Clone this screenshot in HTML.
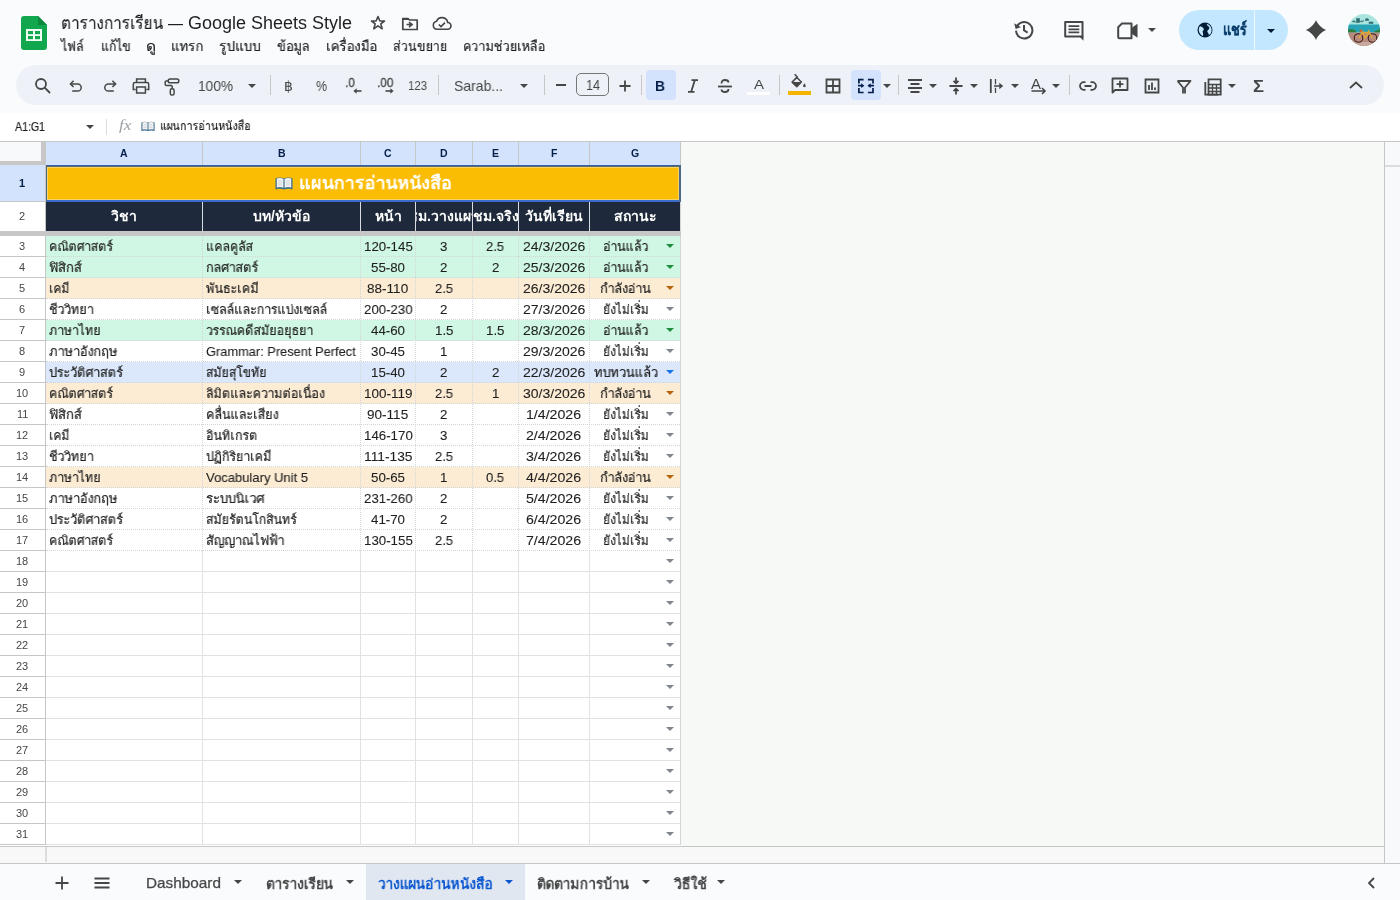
<!DOCTYPE html>
<html><head><meta charset="utf-8"><title>Sheets</title>
<style>html,body{margin:0;padding:0;width:1400px;height:900px;overflow:hidden;background:#fff;font-family:'Liberation Sans',sans-serif;}
body{position:relative}</style></head><body>
<div style="position:absolute;left:0;top:0;width:1400px;height:113px;background:#f9fbfd"></div><svg style="position:absolute;left:21px;top:16px" width="26" height="34" viewBox="0 0 26 34">
<path d="M3 0H17L26 9V31Q26 34 23 34H3Q0 34 0 31V3Q0 0 3 0Z" fill="#11a74f"/>
<path d="M17 0L26 9H17Z" fill="#0b8a3c"/>
<rect x="5" y="13" width="16" height="12" fill="#f1fff5"/>
<rect x="7" y="15" width="5" height="3.2" fill="#11a74f"/><rect x="14" y="15" width="5" height="3.2" fill="#11a74f"/>
<rect x="7" y="20" width="5" height="3.2" fill="#11a74f"/><rect x="14" y="20" width="5" height="3.2" fill="#11a74f"/>
</svg><svg style="position:absolute;left:370px;top:15px" width="16" height="16" viewBox="0 0 16 16"><path d="M8 1.5L9.9 6H14.5L10.8 8.9L12.2 13.8L8 10.9L3.8 13.8L5.2 8.9L1.5 6H6.1Z" fill="none" stroke="#444746" stroke-width="1.6" stroke-linejoin="round"/></svg><svg style="position:absolute;left:401px;top:17px" width="18" height="14" viewBox="0 0 18 14"><path d="M1.8 1.5H7L8.5 3H16.2V12.5H1.8Z" fill="none" stroke="#444746" stroke-width="1.7" stroke-linejoin="round"/><path d="M1.8 1.5H7L8.5 3H1.8Z" fill="#444746"/><path d="M5.5 7.5H9.5M8 5.2L11 7.6L8 10" fill="none" stroke="#444746" stroke-width="1.7"/></svg><svg style="position:absolute;left:432px;top:16px" width="20" height="15" viewBox="0 0 20 15"><path d="M5 13.3H15.5A3.4 3.4 0 0 0 15.7 6.5A5.8 5.8 0 0 0 4.6 5.2A4.1 4.1 0 0 0 5 13.3Z" fill="none" stroke="#444746" stroke-width="1.6"/><path d="M6.8 8.5L9 10.6L13 6.6" fill="none" stroke="#444746" stroke-width="1.6"/></svg><svg style="position:absolute;left:1012px;top:18px" width="24" height="24" viewBox="0 0 24 24"><path d="M4.6 9.2A8.2 8.2 0 1 1 4 12.6" fill="none" stroke="#444746" stroke-width="2"/><path d="M2.2 5.2L3.6 11L9 9.2Z" fill="#444746"/><path d="M12 7V12.3L15.6 14.6" fill="none" stroke="#444746" stroke-width="2"/></svg><svg style="position:absolute;left:1063px;top:20px" width="22" height="22" viewBox="0 0 22 22"><path d="M2.2 2H19.5V16.5H2.2Z" fill="none" stroke="#444746" stroke-width="2" stroke-linejoin="round"/><path d="M16 16L20.5 20.8V16Z" fill="#444746"/><path d="M5.5 6.2H16.3M5.5 9.3H16.3M5.5 12.4H16.3" stroke="#444746" stroke-width="1.8"/></svg><svg style="position:absolute;left:1117px;top:22px" width="22" height="18" viewBox="0 0 22 18"><path d="M5 1.4H14.5V16.2H2.4Q1.2 16.2 1.2 15V5.2Z" fill="none" stroke="#444746" stroke-width="2" stroke-linejoin="round"/><path d="M14.5 6L20.5 1.8V15.8L14.5 11.6Z" fill="#444746"/></svg><svg style="position:absolute;left:1148.0px;top:27.6px" width="8" height="4" viewBox="0 0 10 5"><path d="M0 0H10L5 5Z" fill="#444746"/></svg><div style="position:absolute;left:1179px;top:10px;width:109px;height:40px;border-radius:20px;background:#c2e7ff"></div><div style="position:absolute;left:1254px;top:10px;width:1px;height:40px;background:#f0f8ff"></div><svg style="position:absolute;left:1197px;top:22px" width="16" height="16" viewBox="0 0 16 16"><circle cx="8" cy="8" r="7.5" fill="#001d35"/><path d="M3.2 4.3Q5.5 4.6 6.6 6.4Q7.3 7.8 6.2 8.6Q5.2 9.3 5.8 10.6Q6.3 11.6 6 14.2Q3.8 13.2 2.3 10.5Q1.3 8 2.2 5.3Z M9.6 1.8Q10 3.5 11.2 4.2Q12.6 4.7 12.3 6.2Q12 7.6 10.6 8.4Q9.8 9.2 10.8 10.5Q12.2 12 11.8 13.3Q14.6 11.7 14.6 8Q14.6 3.5 9.6 1.8Z" fill="#c2e7ff"/></svg><svg style="position:absolute;left:1267.0px;top:28.5px" width="8" height="4" viewBox="0 0 10 5"><path d="M0 0H10L5 5Z" fill="#001d35"/></svg><svg style="position:absolute;left:1306px;top:20px" width="20" height="20" viewBox="0 0 20 20"><path d="M10 0C11.2 3.6 16.4 8.8 20 10C16.4 11.2 11.2 16.4 10 20C8.8 16.4 3.6 11.2 0 10C3.6 8.8 8.8 3.6 10 0Z" fill="#444746"/></svg><svg style="position:absolute;left:1348px;top:14px" width="32" height="32" viewBox="0 0 32 32"><defs><clipPath id="av"><circle cx="16" cy="16" r="16"/></clipPath></defs>
<g clip-path="url(#av)"><rect width="32" height="32" fill="#a9e4de"/>
<path d="M8.5 4.5H11.5V8.5H8.5Z M17.5 5Q19 4 20.5 5V6.5H17.5Z M21 8H25V9.5H21Z M4 8L6 6.5L8 8.5M11.5 7L14 8L16 6.5" fill="#2f6f73" stroke="#2f6f73" stroke-width="0.6"/>
<rect y="10.5" width="32" height="8" fill="#27a3b6"/>
<path d="M0 18.5V15.5Q3 14.5 5 15.5Q7 15 8.5 18.5Z M32 18.5V15.5Q30 15 28 17Q26 17 25.5 18.5Z" fill="#2b7f3a"/>
<rect y="18.5" width="32" height="13.5" fill="#b88a7e"/><rect y="28" width="32" height="4" fill="#c8a9a0"/>
<circle cx="10.5" cy="24" r="4.3" fill="none" stroke="#3a1f1a" stroke-width="1.1"/><circle cx="24.5" cy="24" r="4.3" fill="none" stroke="#3a1f1a" stroke-width="1.1"/>
<path d="M10.5 24L14.5 18.5H21L24.5 24M14.5 18.5L17 24L21 18.5M13.5 16.5L14.5 18.5M20.5 16L21 18.5" fill="none" stroke="#e0a535" stroke-width="1.4"/>
<circle cx="13" cy="16.8" r="1.4" fill="#d9612a"/></g></svg><div style="position:absolute;left:16px;top:65px;width:1368px;height:40px;border-radius:20px;background:#eef2f8"></div><svg style="position:absolute;left:33.5px;top:76.5px" width="18" height="18" viewBox="0 0 18 18"><circle cx="7" cy="7" r="5" fill="none" stroke="#444746" stroke-width="1.8"/><path d="M10.7 10.7L16 16" fill="none" stroke="#444746" stroke-width="1.8"/></svg><svg style="position:absolute;left:69.0px;top:78.5px" width="16" height="16" viewBox="0 0 16 16"><path d="M4.6 1.8L1.4 4.9L4.6 8" fill="none" stroke="#444746" stroke-width="1.5"/><path d="M1.8 4.9H8.6A3.6 3.6 0 0 1 8.6 12.1H3.2" fill="none" stroke="#444746" stroke-width="1.5"/></svg><svg style="position:absolute;left:101.0px;top:78.5px" width="16" height="16" viewBox="0 0 16 16"><path d="M11.4 1.8L14.6 4.9L11.4 8" fill="none" stroke="#444746" stroke-width="1.5"/><path d="M14.2 4.9H7.4A3.6 3.6 0 0 0 7.4 12.1H12.8" fill="none" stroke="#444746" stroke-width="1.5"/></svg><svg style="position:absolute;left:132.0px;top:78.0px" width="18" height="16" viewBox="0 0 18 16"><path d="M3.6 11.5H1.3V6.2Q1.3 4.5 3 4.5H15Q16.7 4.5 16.7 6.2V11.5H14.4" fill="none" stroke="#444746" stroke-width="1.5"/><path d="M4.6 4.5V1.1H13.4V4.5" fill="none" stroke="#444746" stroke-width="1.5"/><path d="M4.6 9H13.4V14.9H4.6Z" fill="none" stroke="#444746" stroke-width="1.5"/></svg><svg style="position:absolute;left:164.0px;top:77.5px" width="16" height="18" viewBox="0 0 16 18"><rect x="4.2" y="0.9" width="10.6" height="3.9" rx="1.8" fill="none" stroke="#444746" stroke-width="1.5"/><path d="M4.2 2.9H2.3Q1.2 2.9 1.2 4V6.3Q1.2 7.6 2.5 7.6H7.3Q8.2 7.6 8.2 8.5V10.6" fill="none" stroke="#444746" stroke-width="1.5"/><rect x="6.3" y="10.8" width="3.8" height="6.2" rx="1.6" fill="none" stroke="#444746" stroke-width="1.5"/></svg><svg style="position:absolute;left:248.0px;top:84.0px" width="8" height="4" viewBox="0 0 10 5"><path d="M0 0H10L5 5Z" fill="#444746"/></svg><div style="position:absolute;left:269.5px;top:75px;width:1px;height:20px;background:#c7c7c7"></div><svg style="position:absolute;left:352.5px;top:88.0px" width="9" height="6" viewBox="0 0 9 6"><path d="M8.5 3H2.5" fill="none" stroke="#444746" stroke-width="1.6"/><path d="M3.6 0.3L0.4 3L3.6 5.7Z" fill="#444746"/></svg><svg style="position:absolute;left:384.5px;top:88.0px" width="9" height="6" viewBox="0 0 9 6"><path d="M0.5 3H6.5" fill="none" stroke="#444746" stroke-width="1.6"/><path d="M5.4 0.3L8.6 3L5.4 5.7Z" fill="#444746"/></svg><div style="position:absolute;left:438px;top:75px;width:1px;height:20px;background:#c7c7c7"></div><svg style="position:absolute;left:520.4px;top:84.0px" width="8" height="4" viewBox="0 0 10 5"><path d="M0 0H10L5 5Z" fill="#444746"/></svg><div style="position:absolute;left:544px;top:75px;width:1px;height:20px;background:#c7c7c7"></div><div style="position:absolute;left:556px;top:84px;width:10px;height:1.8px;background:#444746"></div><div style="position:absolute;left:576px;top:73px;width:31.4px;height:21.4px;border:1.3px solid #747775;border-radius:5px"></div><svg style="position:absolute;left:618.7px;top:79.5px" width="12" height="12" viewBox="0 0 12 12"><path d="M6 0.5V11.5M0.5 6H11.5" fill="none" stroke="#444746" stroke-width="1.8"/></svg><div style="position:absolute;left:641px;top:75px;width:1px;height:20px;background:#c7c7c7"></div><div style="position:absolute;left:646px;top:70px;width:30px;height:30px;border-radius:4px;background:#d3e3fd"></div><svg style="position:absolute;left:686.5px;top:79.0px" width="12" height="14" viewBox="0 0 12 14"><path d="M4.5 1.2H11M1 12.8H7.5M7.8 1.2L4.2 12.8" fill="none" stroke="#444746" stroke-width="1.8"/></svg><svg style="position:absolute;left:717.0px;top:78.0px" width="16" height="16" viewBox="0 0 16 16"><path d="M1 8.5H15" fill="none" stroke="#444746" stroke-width="1.8"/><path d="M4.5 5.5Q4.5 2 8 2Q11.5 2 11.5 4.5M4.5 11.5Q4.5 14 8 14Q11.5 14 11.5 11" fill="none" stroke="#444746" stroke-width="1.8"/></svg><div style="position:absolute;left:747px;top:92px;width:23px;height:3px;background:#ffffff"></div><div style="position:absolute;left:778.5px;top:75px;width:1px;height:20px;background:#c7c7c7"></div><svg style="position:absolute;left:790px;top:72px" width="18" height="17" viewBox="0 0 18 17"><path d="M4.6 2.3L7.6 5.2" fill="none" stroke="#444746" stroke-width="1.5"/><path d="M2.1 10.1L6.8 5.4L11.4 10.1L6.8 14.8Z" fill="none" stroke="#444746" stroke-width="1.5" stroke-linejoin="round"/><path d="M2.1 10.1H11.4L6.8 14.8Z" fill="#444746"/><path d="M14.4 11.3Q12.7 13.5 13.1 14.5Q14.4 15.9 15.7 14.5Q16.1 13.5 14.4 11.3Z" fill="#444746"/></svg><div style="position:absolute;left:788px;top:91px;width:23px;height:4px;background:#f4b400"></div><svg style="position:absolute;left:825.0px;top:78.0px" width="16" height="16" viewBox="0 0 16 16"><path d="M1.5 1.5H14.5V14.5H1.5ZM8 1.5V14.5M1.5 8H14.5" fill="none" stroke="#444746" stroke-width="1.8"/></svg><div style="position:absolute;left:851px;top:70px;width:30px;height:30px;border-radius:4px;background:#d3e3fd"></div><svg style="position:absolute;left:856px;top:77px" width="20" height="18" viewBox="0 0 20 18"><path d="M7.6 2.6H2.9V6.6M2.9 10.9V15.5H7.6M11.9 2.6H17V6.6M17 10.9V15.5H11.9" fill="none" stroke="#041e49" stroke-width="1.7"/><path d="M2 8.7H6M12.3 8.7H18" stroke="#041e49" stroke-width="1.7"/><path d="M5.2 6.3L8.4 8.7L5.2 11.1ZM14.7 6.3L11.5 8.7L14.7 11.1Z" fill="#041e49"/></svg><svg style="position:absolute;left:883.3px;top:84.0px" width="8" height="4" viewBox="0 0 10 5"><path d="M0 0H10L5 5Z" fill="#444746"/></svg><div style="position:absolute;left:897.5px;top:75px;width:1px;height:20px;background:#c7c7c7"></div><svg style="position:absolute;left:907.0px;top:78.0px" width="16" height="16" viewBox="0 0 16 16"><path d="M1 2H15M3.5 6H12.5M1 10H15M3.5 14H12.5" fill="none" stroke="#444746" stroke-width="1.8"/></svg><svg style="position:absolute;left:929.0px;top:84.0px" width="8" height="4" viewBox="0 0 10 5"><path d="M0 0H10L5 5Z" fill="#444746"/></svg><svg style="position:absolute;left:949.0px;top:77.0px" width="14" height="18" viewBox="0 0 14 18"><path d="M0.5 9H13.5M7 0.5V6M4.5 3.8L7 6.2L9.5 3.8M7 17.5V12M4.5 14.2L7 11.8L9.5 14.2" fill="none" stroke="#444746" stroke-width="1.8"/></svg><svg style="position:absolute;left:970.0px;top:84.0px" width="8" height="4" viewBox="0 0 10 5"><path d="M0 0H10L5 5Z" fill="#444746"/></svg><svg style="position:absolute;left:989.0px;top:78.0px" width="16" height="16" viewBox="0 0 16 16"><path d="M1.8 1V15" fill="none" stroke="#444746" stroke-width="1.8"/><path d="M6.5 1V6.2M6.5 9.8V15" fill="none" stroke="#444746" stroke-width="1.3"/><path d="M5 8H12.5" fill="none" stroke="#444746" stroke-width="1.5"/><path d="M10.3 4.8L14.2 8L10.3 11.2Z" fill="#444746"/></svg><svg style="position:absolute;left:1011.0px;top:84.0px" width="8" height="4" viewBox="0 0 10 5"><path d="M0 0H10L5 5Z" fill="#444746"/></svg><svg style="position:absolute;left:1030.5px;top:87.0px" width="16" height="8" viewBox="0 0 16 8"><path d="M0.5 4H14M11 1L14 4L11 7" fill="none" stroke="#444746" stroke-width="1.6"/></svg><svg style="position:absolute;left:1052.0px;top:84.0px" width="8" height="4" viewBox="0 0 10 5"><path d="M0 0H10L5 5Z" fill="#444746"/></svg><div style="position:absolute;left:1068.5px;top:75px;width:1px;height:20px;background:#c7c7c7"></div><svg style="position:absolute;left:1079.0px;top:81.0px" width="18" height="10" viewBox="0 0 18 10"><path d="M6.5 1.2H4.8A3.8 3.8 0 0 0 4.8 8.8H6.5M11.5 1.2H13.2A3.8 3.8 0 0 1 13.2 8.8H11.5M5.5 5H12.5" fill="none" stroke="#444746" stroke-width="1.8"/></svg><svg style="position:absolute;left:1111.0px;top:77.0px" width="18" height="18" viewBox="0 0 18 18"><path d="M1.5 15.5V1.5H16.5V13H4Z" fill="none" stroke="#444746" stroke-width="1.8" stroke-linejoin="round"/><path d="M9 3.8V10.6M5.6 7.2H12.4" fill="none" stroke="#444746" stroke-width="1.8"/></svg><svg style="position:absolute;left:1144.0px;top:78.0px" width="16" height="16" viewBox="0 0 16 16"><path d="M1.5 1.5H14.5V14.5H1.5Z" fill="none" stroke="#444746" stroke-width="1.8"/><path d="M5 7V12M8 4.5V12M11 9.5V12" fill="none" stroke="#444746" stroke-width="1.8"/></svg><svg style="position:absolute;left:1175.5px;top:78.5px" width="16" height="16" viewBox="0 0 16 16"><path d="M1.5 2H14.5L9 8.5V14.5M7 14.5V8.5L1.5 2" fill="none" stroke="#444746" stroke-width="1.8" stroke-linejoin="round"/></svg><svg style="position:absolute;left:1204.0px;top:77.5px" width="18" height="18" viewBox="0 0 18 18"><path d="M1.3 4V16.7H14" fill="none" stroke="#444746" stroke-width="1.8"/><path d="M4.5 1.3H16.7V16.7H4.5Z" fill="none" stroke="#444746" stroke-width="1.8"/><path d="M4.5 6.5H16.7M4.5 10H16.7M4.5 13.5H16.7M8.5 6.5V16.7M12.5 6.5V16.7" fill="none" stroke="#444746" stroke-width="1.4"/></svg><svg style="position:absolute;left:1228.0px;top:84.0px" width="8" height="4" viewBox="0 0 10 5"><path d="M0 0H10L5 5Z" fill="#444746"/></svg><svg style="position:absolute;left:1349.0px;top:81.0px" width="14" height="8" viewBox="0 0 14 8"><path d="M1 7L7 1.5L13 7" fill="none" stroke="#444746" stroke-width="1.8"/></svg><div style="position:absolute;left:0;top:113px;width:1400px;height:28px;background:#ffffff"></div><svg style="position:absolute;left:86.0px;top:124.5px" width="8" height="4" viewBox="0 0 10 5"><path d="M0 0H10L5 5Z" fill="#444746"/></svg><div style="position:absolute;left:106px;top:119px;width:1px;height:16px;background:#dadce0"></div><svg style="position:absolute;left:141px;top:120px" width="14" height="12" viewBox="0 0 18 14"><path d="M0.5 2.5Q4.5 0.5 9 2.5Q13.5 0.5 17.5 2.5V13.5Q13.5 12 9 13.5Q4.5 12 0.5 13.5Z" fill="#3c6e8c"/><path d="M1.8 2.6Q5 1.3 8.4 2.9V11.8Q5 10.5 1.8 11.6ZM9.6 2.9Q13 1.3 16.2 2.6V11.6Q13 10.5 9.6 11.8Z" fill="#f4f4f4"/><path d="M3 5H7.3M3 7H7.3M3 9H7.3M10.7 5H15M10.7 7H15M10.7 9H15" stroke="#b9c3cc" stroke-width="0.6"/></svg><div style="position:absolute;left:0;top:141px;width:1400px;height:722px;background:#f7f9f6"></div><div style="position:absolute;left:0;top:141px;width:1400px;height:1px;background:#c4c7c5"></div><div style="position:absolute;left:0;top:165px;width:681px;height:680px;background:#ffffff"></div><div style="position:absolute;left:0;top:142px;width:41px;height:19px;background:#f8f9fa"></div><div style="position:absolute;left:41px;top:142px;width:5px;height:23px;background:#c7c7c7"></div><div style="position:absolute;left:0;top:161px;width:46px;height:4px;background:#c7c7c7"></div><div style="position:absolute;left:46px;top:142px;width:634px;height:23px;background:#d3e3fd"></div><div style="position:absolute;left:202px;top:142px;width:1px;height:23px;background:#c4c7c5"></div><div style="position:absolute;left:360px;top:142px;width:1px;height:23px;background:#c4c7c5"></div><div style="position:absolute;left:415px;top:142px;width:1px;height:23px;background:#c4c7c5"></div><div style="position:absolute;left:472px;top:142px;width:1px;height:23px;background:#c4c7c5"></div><div style="position:absolute;left:518px;top:142px;width:1px;height:23px;background:#c4c7c5"></div><div style="position:absolute;left:589px;top:142px;width:1px;height:23px;background:#c4c7c5"></div><div style="position:absolute;left:680px;top:142px;width:1px;height:23px;background:#c4c7c5"></div><div style="position:absolute;left:680px;top:165px;width:1px;height:680px;background:#d3d6d9"></div><div style="position:absolute;left:1384px;top:142px;width:1px;height:721px;background:#c4c7c5"></div><div style="position:absolute;left:1385px;top:142px;width:15px;height:721px;background:#f8f9fa"></div><div style="position:absolute;left:1385px;top:165px;width:15px;height:2px;background:#dadce0"></div><div style="position:absolute;left:0;top:165px;width:45px;height:36px;background:#d3e3fd"></div><div style="position:absolute;left:46px;top:165px;width:634px;height:36px;background:#fbbc04"></div><div style="position:absolute;left:0px;top:201px;width:46px;height:1px;background:#c4c7c5"></div><div style="position:absolute;left:0;top:202px;width:45px;height:29px;background:#ffffff"></div><div style="position:absolute;left:46px;top:201px;width:634px;height:30px;background:#1e293b"></div><div style="position:absolute;left:202px;top:202px;width:1px;height:29px;background:#d9dde3"></div><div style="position:absolute;left:360px;top:202px;width:1px;height:29px;background:#d9dde3"></div><div style="position:absolute;left:415px;top:202px;width:1px;height:29px;background:#d9dde3"></div><div style="position:absolute;left:472px;top:202px;width:1px;height:29px;background:#d9dde3"></div><div style="position:absolute;left:518px;top:202px;width:1px;height:29px;background:#d9dde3"></div><div style="position:absolute;left:589px;top:202px;width:1px;height:29px;background:#d9dde3"></div><div style="position:absolute;left:47px;top:167px;width:630px;height:31px;border:1px solid #f7d265"></div><div style="position:absolute;left:46px;top:165px;width:634px;height:1px;background:#3b62a8"></div><div style="position:absolute;left:46px;top:166px;width:634px;height:1px;background:#5f6a5a"></div><div style="position:absolute;left:46px;top:200px;width:634px;height:2px;background:#3a6bc9"></div><div style="position:absolute;left:46px;top:165px;width:1px;height:37px;background:#4d6788"></div><div style="position:absolute;left:679px;top:165px;width:1.5px;height:37px;background:#4d6788"></div><svg style="position:absolute;left:274.5px;top:176px" width="18" height="14" viewBox="0 0 18 14"><path d="M0.5 2.5Q4.5 0.5 9 2.5Q13.5 0.5 17.5 2.5V13.5Q13.5 12 9 13.5Q4.5 12 0.5 13.5Z" fill="#3c6e8c"/><path d="M1.8 2.6Q5 1.3 8.4 2.9V11.8Q5 10.5 1.8 11.6ZM9.6 2.9Q13 1.3 16.2 2.6V11.6Q13 10.5 9.6 11.8Z" fill="#f4f4f4"/><path d="M3 5H7.3M3 7H7.3M3 9H7.3M10.7 5H15M10.7 7H15M10.7 9H15" stroke="#b9c3cc" stroke-width="0.6"/></svg><div style="position:absolute;left:0;top:231px;width:681px;height:5px;background:#c7c7c7"></div><div style="position:absolute;left:45px;top:165px;width:1px;height:680px;background:#c4c7c5"></div><div style="position:absolute;left:0px;top:256px;width:46px;height:1px;background:#c4c7c5"></div><div style="position:absolute;left:46px;top:236px;width:634px;height:21px;background:#cff7e3"></div><svg style="position:absolute;left:665.8px;top:244.0px" width="8" height="4" viewBox="0 0 10 5"><path d="M0 0H10L5 5Z" fill="#1e8e3e"/></svg><div style="position:absolute;left:0px;top:277px;width:46px;height:1px;background:#c4c7c5"></div><div style="position:absolute;left:46px;top:257px;width:634px;height:21px;background:#cff7e3"></div><svg style="position:absolute;left:665.8px;top:265.0px" width="8" height="4" viewBox="0 0 10 5"><path d="M0 0H10L5 5Z" fill="#1e8e3e"/></svg><div style="position:absolute;left:0px;top:298px;width:46px;height:1px;background:#c4c7c5"></div><div style="position:absolute;left:46px;top:278px;width:634px;height:21px;background:#fdecd4"></div><svg style="position:absolute;left:665.8px;top:286.0px" width="8" height="4" viewBox="0 0 10 5"><path d="M0 0H10L5 5Z" fill="#b5640c"/></svg><div style="position:absolute;left:0px;top:319px;width:46px;height:1px;background:#c4c7c5"></div><div style="position:absolute;left:46px;top:299px;width:634px;height:21px;background:#ffffff"></div><svg style="position:absolute;left:665.8px;top:307.0px" width="8" height="4" viewBox="0 0 10 5"><path d="M0 0H10L5 5Z" fill="#80868b"/></svg><div style="position:absolute;left:0px;top:340px;width:46px;height:1px;background:#c4c7c5"></div><div style="position:absolute;left:46px;top:320px;width:634px;height:21px;background:#cff7e3"></div><svg style="position:absolute;left:665.8px;top:328.0px" width="8" height="4" viewBox="0 0 10 5"><path d="M0 0H10L5 5Z" fill="#1e8e3e"/></svg><div style="position:absolute;left:0px;top:361px;width:46px;height:1px;background:#c4c7c5"></div><div style="position:absolute;left:46px;top:341px;width:634px;height:21px;background:#ffffff"></div><svg style="position:absolute;left:665.8px;top:349.0px" width="8" height="4" viewBox="0 0 10 5"><path d="M0 0H10L5 5Z" fill="#80868b"/></svg><div style="position:absolute;left:0px;top:382px;width:46px;height:1px;background:#c4c7c5"></div><div style="position:absolute;left:46px;top:362px;width:634px;height:21px;background:#dbe7fb"></div><svg style="position:absolute;left:665.8px;top:370.0px" width="8" height="4" viewBox="0 0 10 5"><path d="M0 0H10L5 5Z" fill="#1a73e8"/></svg><div style="position:absolute;left:0px;top:403px;width:46px;height:1px;background:#c4c7c5"></div><div style="position:absolute;left:46px;top:383px;width:634px;height:21px;background:#fdecd4"></div><svg style="position:absolute;left:665.8px;top:391.0px" width="8" height="4" viewBox="0 0 10 5"><path d="M0 0H10L5 5Z" fill="#b5640c"/></svg><div style="position:absolute;left:0px;top:424px;width:46px;height:1px;background:#c4c7c5"></div><div style="position:absolute;left:46px;top:404px;width:634px;height:21px;background:#ffffff"></div><svg style="position:absolute;left:665.8px;top:412.0px" width="8" height="4" viewBox="0 0 10 5"><path d="M0 0H10L5 5Z" fill="#80868b"/></svg><div style="position:absolute;left:0px;top:445px;width:46px;height:1px;background:#c4c7c5"></div><div style="position:absolute;left:46px;top:425px;width:634px;height:21px;background:#ffffff"></div><svg style="position:absolute;left:665.8px;top:433.0px" width="8" height="4" viewBox="0 0 10 5"><path d="M0 0H10L5 5Z" fill="#80868b"/></svg><div style="position:absolute;left:0px;top:466px;width:46px;height:1px;background:#c4c7c5"></div><div style="position:absolute;left:46px;top:446px;width:634px;height:21px;background:#ffffff"></div><svg style="position:absolute;left:665.8px;top:454.0px" width="8" height="4" viewBox="0 0 10 5"><path d="M0 0H10L5 5Z" fill="#80868b"/></svg><div style="position:absolute;left:0px;top:487px;width:46px;height:1px;background:#c4c7c5"></div><div style="position:absolute;left:46px;top:467px;width:634px;height:21px;background:#fdecd4"></div><svg style="position:absolute;left:665.8px;top:475.0px" width="8" height="4" viewBox="0 0 10 5"><path d="M0 0H10L5 5Z" fill="#b5640c"/></svg><div style="position:absolute;left:0px;top:508px;width:46px;height:1px;background:#c4c7c5"></div><div style="position:absolute;left:46px;top:488px;width:634px;height:21px;background:#ffffff"></div><svg style="position:absolute;left:665.8px;top:496.0px" width="8" height="4" viewBox="0 0 10 5"><path d="M0 0H10L5 5Z" fill="#80868b"/></svg><div style="position:absolute;left:0px;top:529px;width:46px;height:1px;background:#c4c7c5"></div><div style="position:absolute;left:46px;top:509px;width:634px;height:21px;background:#ffffff"></div><svg style="position:absolute;left:665.8px;top:517.0px" width="8" height="4" viewBox="0 0 10 5"><path d="M0 0H10L5 5Z" fill="#80868b"/></svg><div style="position:absolute;left:0px;top:550px;width:46px;height:1px;background:#c4c7c5"></div><div style="position:absolute;left:46px;top:530px;width:634px;height:21px;background:#ffffff"></div><svg style="position:absolute;left:665.8px;top:538.0px" width="8" height="4" viewBox="0 0 10 5"><path d="M0 0H10L5 5Z" fill="#80868b"/></svg><div style="position:absolute;left:0px;top:571px;width:46px;height:1px;background:#c4c7c5"></div><svg style="position:absolute;left:665.8px;top:559.0px" width="8" height="4" viewBox="0 0 10 5"><path d="M0 0H10L5 5Z" fill="#80868b"/></svg><div style="position:absolute;left:0px;top:592px;width:46px;height:1px;background:#c4c7c5"></div><svg style="position:absolute;left:665.8px;top:580.0px" width="8" height="4" viewBox="0 0 10 5"><path d="M0 0H10L5 5Z" fill="#80868b"/></svg><div style="position:absolute;left:0px;top:613px;width:46px;height:1px;background:#c4c7c5"></div><svg style="position:absolute;left:665.8px;top:601.0px" width="8" height="4" viewBox="0 0 10 5"><path d="M0 0H10L5 5Z" fill="#80868b"/></svg><div style="position:absolute;left:0px;top:634px;width:46px;height:1px;background:#c4c7c5"></div><svg style="position:absolute;left:665.8px;top:622.0px" width="8" height="4" viewBox="0 0 10 5"><path d="M0 0H10L5 5Z" fill="#80868b"/></svg><div style="position:absolute;left:0px;top:655px;width:46px;height:1px;background:#c4c7c5"></div><svg style="position:absolute;left:665.8px;top:643.0px" width="8" height="4" viewBox="0 0 10 5"><path d="M0 0H10L5 5Z" fill="#80868b"/></svg><div style="position:absolute;left:0px;top:676px;width:46px;height:1px;background:#c4c7c5"></div><svg style="position:absolute;left:665.8px;top:664.0px" width="8" height="4" viewBox="0 0 10 5"><path d="M0 0H10L5 5Z" fill="#80868b"/></svg><div style="position:absolute;left:0px;top:697px;width:46px;height:1px;background:#c4c7c5"></div><svg style="position:absolute;left:665.8px;top:685.0px" width="8" height="4" viewBox="0 0 10 5"><path d="M0 0H10L5 5Z" fill="#80868b"/></svg><div style="position:absolute;left:0px;top:718px;width:46px;height:1px;background:#c4c7c5"></div><svg style="position:absolute;left:665.8px;top:706.0px" width="8" height="4" viewBox="0 0 10 5"><path d="M0 0H10L5 5Z" fill="#80868b"/></svg><div style="position:absolute;left:0px;top:739px;width:46px;height:1px;background:#c4c7c5"></div><svg style="position:absolute;left:665.8px;top:727.0px" width="8" height="4" viewBox="0 0 10 5"><path d="M0 0H10L5 5Z" fill="#80868b"/></svg><div style="position:absolute;left:0px;top:760px;width:46px;height:1px;background:#c4c7c5"></div><svg style="position:absolute;left:665.8px;top:748.0px" width="8" height="4" viewBox="0 0 10 5"><path d="M0 0H10L5 5Z" fill="#80868b"/></svg><div style="position:absolute;left:0px;top:781px;width:46px;height:1px;background:#c4c7c5"></div><svg style="position:absolute;left:665.8px;top:769.0px" width="8" height="4" viewBox="0 0 10 5"><path d="M0 0H10L5 5Z" fill="#80868b"/></svg><div style="position:absolute;left:0px;top:802px;width:46px;height:1px;background:#c4c7c5"></div><svg style="position:absolute;left:665.8px;top:790.0px" width="8" height="4" viewBox="0 0 10 5"><path d="M0 0H10L5 5Z" fill="#80868b"/></svg><div style="position:absolute;left:0px;top:823px;width:46px;height:1px;background:#c4c7c5"></div><svg style="position:absolute;left:665.8px;top:811.0px" width="8" height="4" viewBox="0 0 10 5"><path d="M0 0H10L5 5Z" fill="#80868b"/></svg><div style="position:absolute;left:0px;top:844px;width:46px;height:1px;background:#c4c7c5"></div><svg style="position:absolute;left:665.8px;top:832.0px" width="8" height="4" viewBox="0 0 10 5"><path d="M0 0H10L5 5Z" fill="#80868b"/></svg><div style="position:absolute;left:46px;top:256px;width:634px;height:0;border-top:1px dotted #d3d6d9"></div><div style="position:absolute;left:46px;top:277px;width:634px;height:0;border-top:1px dotted #d3d6d9"></div><div style="position:absolute;left:46px;top:298px;width:634px;height:0;border-top:1px dotted #d3d6d9"></div><div style="position:absolute;left:46px;top:319px;width:634px;height:0;border-top:1px dotted #d3d6d9"></div><div style="position:absolute;left:46px;top:340px;width:634px;height:0;border-top:1px dotted #d3d6d9"></div><div style="position:absolute;left:46px;top:361px;width:634px;height:0;border-top:1px dotted #d3d6d9"></div><div style="position:absolute;left:46px;top:382px;width:634px;height:0;border-top:1px dotted #d3d6d9"></div><div style="position:absolute;left:46px;top:403px;width:634px;height:0;border-top:1px dotted #d3d6d9"></div><div style="position:absolute;left:46px;top:424px;width:634px;height:0;border-top:1px dotted #d3d6d9"></div><div style="position:absolute;left:46px;top:445px;width:634px;height:0;border-top:1px dotted #d3d6d9"></div><div style="position:absolute;left:46px;top:466px;width:634px;height:0;border-top:1px dotted #d3d6d9"></div><div style="position:absolute;left:46px;top:487px;width:634px;height:0;border-top:1px dotted #d3d6d9"></div><div style="position:absolute;left:46px;top:508px;width:634px;height:0;border-top:1px dotted #d3d6d9"></div><div style="position:absolute;left:46px;top:529px;width:634px;height:0;border-top:1px dotted #d3d6d9"></div><div style="position:absolute;left:46px;top:550px;width:634px;height:0;border-top:1px dotted #d3d6d9"></div><div style="position:absolute;left:46px;top:571px;width:634px;height:1px;background:#e2e2e2"></div><div style="position:absolute;left:46px;top:592px;width:634px;height:1px;background:#e2e2e2"></div><div style="position:absolute;left:46px;top:613px;width:634px;height:1px;background:#e2e2e2"></div><div style="position:absolute;left:46px;top:634px;width:634px;height:1px;background:#e2e2e2"></div><div style="position:absolute;left:46px;top:655px;width:634px;height:1px;background:#e2e2e2"></div><div style="position:absolute;left:46px;top:676px;width:634px;height:1px;background:#e2e2e2"></div><div style="position:absolute;left:46px;top:697px;width:634px;height:1px;background:#e2e2e2"></div><div style="position:absolute;left:46px;top:718px;width:634px;height:1px;background:#e2e2e2"></div><div style="position:absolute;left:46px;top:739px;width:634px;height:1px;background:#e2e2e2"></div><div style="position:absolute;left:46px;top:760px;width:634px;height:1px;background:#e2e2e2"></div><div style="position:absolute;left:46px;top:781px;width:634px;height:1px;background:#e2e2e2"></div><div style="position:absolute;left:46px;top:802px;width:634px;height:1px;background:#e2e2e2"></div><div style="position:absolute;left:46px;top:823px;width:634px;height:1px;background:#e2e2e2"></div><div style="position:absolute;left:46px;top:844px;width:634px;height:1px;background:#e2e2e2"></div><div style="position:absolute;left:202px;top:236px;width:0;height:315px;border-left:1px dotted #d3d6d9"></div><div style="position:absolute;left:202px;top:551px;width:1px;height:294px;background:#e2e2e2"></div><div style="position:absolute;left:360px;top:236px;width:0;height:315px;border-left:1px dotted #d3d6d9"></div><div style="position:absolute;left:360px;top:551px;width:1px;height:294px;background:#e2e2e2"></div><div style="position:absolute;left:415px;top:236px;width:0;height:315px;border-left:1px dotted #d3d6d9"></div><div style="position:absolute;left:415px;top:551px;width:1px;height:294px;background:#e2e2e2"></div><div style="position:absolute;left:472px;top:236px;width:0;height:315px;border-left:1px dotted #d3d6d9"></div><div style="position:absolute;left:472px;top:551px;width:1px;height:294px;background:#e2e2e2"></div><div style="position:absolute;left:518px;top:236px;width:0;height:315px;border-left:1px dotted #d3d6d9"></div><div style="position:absolute;left:518px;top:551px;width:1px;height:294px;background:#e2e2e2"></div><div style="position:absolute;left:589px;top:236px;width:0;height:315px;border-left:1px dotted #d3d6d9"></div><div style="position:absolute;left:589px;top:551px;width:1px;height:294px;background:#e2e2e2"></div><div style="position:absolute;left:0;top:845px;width:681px;height:1px;background:#ffffff"></div><div style="position:absolute;left:0;top:846px;width:1384px;height:1px;background:#c4c7c5"></div><div style="position:absolute;left:0;top:847px;width:1384px;height:16px;background:#f8f8f8"></div><div style="position:absolute;left:45px;top:847px;width:2px;height:15px;background:#dadce0"></div><div style="position:absolute;left:0;top:863px;width:1400px;height:1px;background:#c4c7c5"></div><div style="position:absolute;left:0;top:864px;width:1400px;height:36px;background:#f9fbfd"></div><svg style="position:absolute;left:55.0px;top:876.0px" width="14" height="14" viewBox="0 0 14 14"><path d="M7 0.5V13.5M0.5 7H13.5" fill="none" stroke="#444746" stroke-width="1.8"/></svg><svg style="position:absolute;left:93.5px;top:877.0px" width="16" height="12" viewBox="0 0 16 12"><path d="M0.5 1.5H15.5M0.5 6H15.5M0.5 10.5H15.5" fill="none" stroke="#444746" stroke-width="1.8"/></svg><svg style="position:absolute;left:234.0px;top:880.0px" width="8" height="4" viewBox="0 0 10 5"><path d="M0 0H10L5 5Z" fill="#444746"/></svg><svg style="position:absolute;left:345.8px;top:880.0px" width="8" height="4" viewBox="0 0 10 5"><path d="M0 0H10L5 5Z" fill="#444746"/></svg><div style="position:absolute;left:366px;top:864px;width:159px;height:36px;background:#e1e7f0"></div><svg style="position:absolute;left:504.6px;top:880.0px" width="8" height="4" viewBox="0 0 10 5"><path d="M0 0H10L5 5Z" fill="#0b57d0"/></svg><svg style="position:absolute;left:641.7px;top:880.0px" width="8" height="4" viewBox="0 0 10 5"><path d="M0 0H10L5 5Z" fill="#444746"/></svg><svg style="position:absolute;left:717.4px;top:880.0px" width="8" height="4" viewBox="0 0 10 5"><path d="M0 0H10L5 5Z" fill="#444746"/></svg><svg style="position:absolute;left:1367.0px;top:877.0px" width="8" height="12" viewBox="0 0 8 12"><path d="M7 1L2 6L7 11" fill="none" stroke="#444746" stroke-width="1.8"/></svg>
<div style="position:absolute;left:61.00px;top:13.76px;font-size:18px;line-height:18px;font-weight:400;color:#1f1f1f;white-space:nowrap;will-change:transform;transform:scaleX(0.8430);transform-origin:0 0;-webkit-text-stroke:0.15px #1f1f1f;">ตารางการเรียน</div><div style="position:absolute;left:168.30px;top:13.76px;font-size:18px;line-height:18px;font-weight:400;color:#1f1f1f;white-space:nowrap;will-change:transform;transform:scaleX(0.8056);transform-origin:0 0;">—</div><div style="position:absolute;left:187.60px;top:13.76px;font-size:18px;line-height:18px;font-weight:400;color:#1f1f1f;white-space:nowrap;will-change:transform;">Google Sheets Style</div><div style="position:absolute;left:61.00px;top:38.65px;font-size:14px;line-height:14px;font-weight:400;color:#1f1f1f;white-space:nowrap;will-change:transform;transform:scaleX(0.8846);transform-origin:0 0;-webkit-text-stroke:0.2px #1f1f1f;">ไฟล์</div><div style="position:absolute;left:101.00px;top:38.65px;font-size:14px;line-height:14px;font-weight:400;color:#1f1f1f;white-space:nowrap;will-change:transform;transform:scaleX(0.8824);transform-origin:0 0;-webkit-text-stroke:0.2px #1f1f1f;">แก้ไข</div><div style="position:absolute;left:146.00px;top:38.65px;font-size:14px;line-height:14px;font-weight:400;color:#1f1f1f;white-space:nowrap;will-change:transform;transform:scaleX(1.1111);transform-origin:0 0;-webkit-text-stroke:0.2px #1f1f1f;">ดู</div><div style="position:absolute;left:171.00px;top:38.65px;font-size:14px;line-height:14px;font-weight:400;color:#1f1f1f;white-space:nowrap;will-change:transform;transform:scaleX(0.9412);transform-origin:0 0;-webkit-text-stroke:0.2px #1f1f1f;">แทรก</div><div style="position:absolute;left:219.00px;top:38.65px;font-size:14px;line-height:14px;font-weight:400;color:#1f1f1f;white-space:nowrap;will-change:transform;transform:scaleX(0.9545);transform-origin:0 0;-webkit-text-stroke:0.2px #1f1f1f;">รูปแบบ</div><div style="position:absolute;left:277.00px;top:38.65px;font-size:14px;line-height:14px;font-weight:400;color:#1f1f1f;white-space:nowrap;will-change:transform;transform:scaleX(0.9167);transform-origin:0 0;-webkit-text-stroke:0.2px #1f1f1f;">ข้อมูล</div><div style="position:absolute;left:326.00px;top:38.65px;font-size:14px;line-height:14px;font-weight:400;color:#1f1f1f;white-space:nowrap;will-change:transform;transform:scaleX(0.9444);transform-origin:0 0;-webkit-text-stroke:0.2px #1f1f1f;">เครื่องมือ</div><div style="position:absolute;left:393.00px;top:38.65px;font-size:14px;line-height:14px;font-weight:400;color:#1f1f1f;white-space:nowrap;will-change:transform;transform:scaleX(0.8852);transform-origin:0 0;-webkit-text-stroke:0.2px #1f1f1f;">ส่วนขยาย</div><div style="position:absolute;left:463.00px;top:38.65px;font-size:14px;line-height:14px;font-weight:400;color:#1f1f1f;white-space:nowrap;will-change:transform;transform:scaleX(0.9011);transform-origin:0 0;-webkit-text-stroke:0.2px #1f1f1f;">ความช่วยเหลือ</div><div style="position:absolute;left:1222.60px;top:21.96px;font-size:16px;line-height:16px;font-weight:700;color:#0b3d6b;white-space:nowrap;will-change:transform;transform:scaleX(0.8000);transform-origin:0 0;-webkit-text-stroke:0.2px #0b3d6b;">แชร์</div><div style="position:absolute;left:198.30px;top:78.73px;font-size:14.5px;line-height:14.5px;font-weight:400;color:#444746;white-space:nowrap;will-change:transform;transform:scaleX(0.9436);transform-origin:0 0;">100%</div><div style="position:absolute;left:284.00px;top:79.15px;font-size:14px;line-height:14px;font-weight:400;color:#444746;white-space:nowrap;will-change:transform;">฿</div><div style="position:absolute;left:315.50px;top:79.15px;font-size:14px;line-height:14px;font-weight:400;color:#444746;white-space:nowrap;will-change:transform;transform:scaleX(0.8833);transform-origin:0 0;">%</div><div style="position:absolute;left:345.00px;top:76.00px;font-size:13px;line-height:13px;font-weight:400;color:#444746;white-space:nowrap;will-change:transform;transform:scaleX(0.9222);transform-origin:0 0;-webkit-text-stroke:0.3px #444746;">.0</div><div style="position:absolute;left:377.00px;top:76.00px;font-size:13px;line-height:13px;font-weight:400;color:#444746;white-space:nowrap;will-change:transform;transform:scaleX(0.9127);transform-origin:0 0;-webkit-text-stroke:0.3px #444746;">.00</div><div style="position:absolute;left:408.00px;top:79.92px;font-size:12.5px;line-height:12.5px;font-weight:400;color:#444746;white-space:nowrap;will-change:transform;transform:scaleX(0.9109);transform-origin:0 0;">123</div><div style="position:absolute;left:454.20px;top:78.30px;font-size:15px;line-height:15px;font-weight:400;color:#444746;white-space:nowrap;will-change:transform;transform:scaleX(0.9328);transform-origin:0 0;">Sarab...</div><div style="position:absolute;left:585.80px;top:78.15px;font-size:14px;line-height:14px;font-weight:400;color:#444746;white-space:nowrap;will-change:transform;transform:scaleX(0.8987);transform-origin:0 0;">14</div><div style="position:absolute;left:655.00px;top:77.80px;font-size:15px;line-height:15px;font-weight:700;color:#041e49;white-space:nowrap;will-change:transform;transform:scaleX(0.9222);transform-origin:0 0;">B</div><div style="position:absolute;left:753.50px;top:77.50px;font-size:13px;line-height:13px;font-weight:400;color:#444746;white-space:nowrap;will-change:transform;transform:scaleX(1.1532);transform-origin:0 0;">A</div><div style="position:absolute;left:1031.00px;top:77.15px;font-size:14px;line-height:14px;font-weight:400;color:#444746;white-space:nowrap;will-change:transform;transform:scaleX(1.0702);transform-origin:0 0;">A</div><div style="position:absolute;left:1252.50px;top:77.61px;font-size:17px;line-height:17px;font-weight:700;color:#444746;white-space:nowrap;will-change:transform;transform:scaleX(1.0781);transform-origin:0 0;">Σ</div><div style="position:absolute;left:14.50px;top:119.50px;font-size:13px;line-height:13px;font-weight:400;color:#1f1f1f;white-space:nowrap;will-change:transform;transform:scaleX(0.8139);transform-origin:0 0;-webkit-text-stroke:0.2px #1f1f1f;">A1:G1</div><div style="position:absolute;left:119.00px;top:119.15px;font-size:14px;line-height:14px;font-weight:400;color:#9aa0a6;white-space:nowrap;will-change:transform;transform:scaleX(1.2365);transform-origin:0 0;font-family:'Liberation Serif',serif;font-style:italic;">fx</div><div style="position:absolute;left:160.00px;top:120.42px;font-size:12.5px;line-height:12.5px;font-weight:400;color:#1f1f1f;white-space:nowrap;will-change:transform;transform:scaleX(0.8349);transform-origin:0 0;-webkit-text-stroke:0.2px #1f1f1f;">แผนการอ่านหนังสือ</div><div style="position:absolute;left:120.20px;top:148.11px;font-size:10.5px;line-height:10.5px;font-weight:700;color:#041e49;white-space:nowrap;will-change:transform;">A</div><div style="position:absolute;left:277.70px;top:148.11px;font-size:10.5px;line-height:10.5px;font-weight:700;color:#041e49;white-space:nowrap;will-change:transform;">B</div><div style="position:absolute;left:384.20px;top:148.11px;font-size:10.5px;line-height:10.5px;font-weight:700;color:#041e49;white-space:nowrap;will-change:transform;">C</div><div style="position:absolute;left:440.20px;top:148.11px;font-size:10.5px;line-height:10.5px;font-weight:700;color:#041e49;white-space:nowrap;will-change:transform;">D</div><div style="position:absolute;left:491.99px;top:148.11px;font-size:10.5px;line-height:10.5px;font-weight:700;color:#041e49;white-space:nowrap;will-change:transform;">E</div><div style="position:absolute;left:550.79px;top:148.11px;font-size:10.5px;line-height:10.5px;font-weight:700;color:#041e49;white-space:nowrap;will-change:transform;">F</div><div style="position:absolute;left:630.91px;top:148.11px;font-size:10.5px;line-height:10.5px;font-weight:700;color:#041e49;white-space:nowrap;will-change:transform;">G</div><div style="position:absolute;left:19.44px;top:177.69px;font-size:11px;line-height:11px;font-weight:700;color:#041e49;white-space:nowrap;will-change:transform;">1</div><div style="position:absolute;left:19.44px;top:210.69px;font-size:11px;line-height:11px;font-weight:400;color:#444746;white-space:nowrap;will-change:transform;">2</div><div style="position:absolute;left:299.00px;top:174.46px;font-size:18px;line-height:18px;font-weight:700;color:#ffffff;white-space:nowrap;will-change:transform;transform:scaleX(0.9935);transform-origin:0 0;">แผนการอ่านหนังสือ</div><div style="position:absolute;left:46.0px;top:202.65px;width:156.0px;height:26px;overflow:hidden"><div style="position:absolute;left:65.00px;top:6px;font-size:14px;line-height:14px;font-weight:700;color:#ffffff;white-space:nowrap;will-change:transform;">วิชา</div></div><div style="position:absolute;left:203.0px;top:202.65px;width:157.0px;height:26px;overflow:hidden"><div style="position:absolute;left:50.05px;top:6px;font-size:14px;line-height:14px;font-weight:700;color:#ffffff;white-space:nowrap;will-change:transform;">บท/หัวข้อ</div></div><div style="position:absolute;left:361.0px;top:202.65px;width:54.0px;height:26px;overflow:hidden"><div style="position:absolute;left:13.50px;top:6px;font-size:14px;line-height:14px;font-weight:700;color:#ffffff;white-space:nowrap;will-change:transform;">หน้า</div></div><div style="position:absolute;left:416.0px;top:202.65px;width:56.0px;height:26px;overflow:hidden"><div style="position:absolute;left:-8.45px;top:6px;font-size:14px;line-height:14px;font-weight:700;color:#ffffff;white-space:nowrap;will-change:transform;">ชม.วางแผน</div></div><div style="position:absolute;left:473.0px;top:202.65px;width:45.0px;height:26px;overflow:hidden"><div style="position:absolute;left:-0.45px;top:6px;font-size:14px;line-height:14px;font-weight:700;color:#ffffff;white-space:nowrap;will-change:transform;">ชม.จริง</div></div><div style="position:absolute;left:519.0px;top:202.65px;width:70.0px;height:26px;overflow:hidden"><div style="position:absolute;left:6.00px;top:6px;font-size:14px;line-height:14px;font-weight:700;color:#ffffff;white-space:nowrap;will-change:transform;">วันที่เรียน</div></div><div style="position:absolute;left:590.0px;top:202.65px;width:90.0px;height:26px;overflow:hidden"><div style="position:absolute;left:23.50px;top:6px;font-size:14px;line-height:14px;font-weight:700;color:#ffffff;white-space:nowrap;will-change:transform;">สถานะ</div></div><div style="position:absolute;left:19.44px;top:240.69px;font-size:11px;line-height:11px;font-weight:400;color:#444746;white-space:nowrap;will-change:transform;">3</div><div style="position:absolute;left:19.44px;top:261.69px;font-size:11px;line-height:11px;font-weight:400;color:#444746;white-space:nowrap;will-change:transform;">4</div><div style="position:absolute;left:19.44px;top:282.69px;font-size:11px;line-height:11px;font-weight:400;color:#444746;white-space:nowrap;will-change:transform;">5</div><div style="position:absolute;left:19.44px;top:303.69px;font-size:11px;line-height:11px;font-weight:400;color:#444746;white-space:nowrap;will-change:transform;">6</div><div style="position:absolute;left:19.44px;top:324.69px;font-size:11px;line-height:11px;font-weight:400;color:#444746;white-space:nowrap;will-change:transform;">7</div><div style="position:absolute;left:19.44px;top:345.69px;font-size:11px;line-height:11px;font-weight:400;color:#444746;white-space:nowrap;will-change:transform;">8</div><div style="position:absolute;left:19.44px;top:366.69px;font-size:11px;line-height:11px;font-weight:400;color:#444746;white-space:nowrap;will-change:transform;">9</div><div style="position:absolute;left:16.38px;top:387.69px;font-size:11px;line-height:11px;font-weight:400;color:#444746;white-space:nowrap;will-change:transform;">10</div><div style="position:absolute;left:16.79px;top:408.69px;font-size:11px;line-height:11px;font-weight:400;color:#444746;white-space:nowrap;will-change:transform;">11</div><div style="position:absolute;left:16.38px;top:429.69px;font-size:11px;line-height:11px;font-weight:400;color:#444746;white-space:nowrap;will-change:transform;">12</div><div style="position:absolute;left:16.38px;top:450.69px;font-size:11px;line-height:11px;font-weight:400;color:#444746;white-space:nowrap;will-change:transform;">13</div><div style="position:absolute;left:16.38px;top:471.69px;font-size:11px;line-height:11px;font-weight:400;color:#444746;white-space:nowrap;will-change:transform;">14</div><div style="position:absolute;left:16.38px;top:492.69px;font-size:11px;line-height:11px;font-weight:400;color:#444746;white-space:nowrap;will-change:transform;">15</div><div style="position:absolute;left:16.38px;top:513.69px;font-size:11px;line-height:11px;font-weight:400;color:#444746;white-space:nowrap;will-change:transform;">16</div><div style="position:absolute;left:16.38px;top:534.69px;font-size:11px;line-height:11px;font-weight:400;color:#444746;white-space:nowrap;will-change:transform;">17</div><div style="position:absolute;left:16.38px;top:555.69px;font-size:11px;line-height:11px;font-weight:400;color:#444746;white-space:nowrap;will-change:transform;">18</div><div style="position:absolute;left:16.38px;top:576.69px;font-size:11px;line-height:11px;font-weight:400;color:#444746;white-space:nowrap;will-change:transform;">19</div><div style="position:absolute;left:16.38px;top:597.69px;font-size:11px;line-height:11px;font-weight:400;color:#444746;white-space:nowrap;will-change:transform;">20</div><div style="position:absolute;left:16.38px;top:618.69px;font-size:11px;line-height:11px;font-weight:400;color:#444746;white-space:nowrap;will-change:transform;">21</div><div style="position:absolute;left:16.38px;top:639.69px;font-size:11px;line-height:11px;font-weight:400;color:#444746;white-space:nowrap;will-change:transform;">22</div><div style="position:absolute;left:16.38px;top:660.69px;font-size:11px;line-height:11px;font-weight:400;color:#444746;white-space:nowrap;will-change:transform;">23</div><div style="position:absolute;left:16.38px;top:681.69px;font-size:11px;line-height:11px;font-weight:400;color:#444746;white-space:nowrap;will-change:transform;">24</div><div style="position:absolute;left:16.38px;top:702.69px;font-size:11px;line-height:11px;font-weight:400;color:#444746;white-space:nowrap;will-change:transform;">25</div><div style="position:absolute;left:16.38px;top:723.69px;font-size:11px;line-height:11px;font-weight:400;color:#444746;white-space:nowrap;will-change:transform;">26</div><div style="position:absolute;left:16.38px;top:744.69px;font-size:11px;line-height:11px;font-weight:400;color:#444746;white-space:nowrap;will-change:transform;">27</div><div style="position:absolute;left:16.38px;top:765.69px;font-size:11px;line-height:11px;font-weight:400;color:#444746;white-space:nowrap;will-change:transform;">28</div><div style="position:absolute;left:16.38px;top:786.69px;font-size:11px;line-height:11px;font-weight:400;color:#444746;white-space:nowrap;will-change:transform;">29</div><div style="position:absolute;left:16.38px;top:807.69px;font-size:11px;line-height:11px;font-weight:400;color:#444746;white-space:nowrap;will-change:transform;">30</div><div style="position:absolute;left:16.38px;top:828.69px;font-size:11px;line-height:11px;font-weight:400;color:#444746;white-space:nowrap;will-change:transform;">31</div><div style="position:absolute;left:49.00px;top:239.74px;font-size:13.3px;line-height:13.3px;font-weight:400;color:#1f1f1f;white-space:nowrap;will-change:transform;transform:scaleX(0.9271);transform-origin:0 0;-webkit-text-stroke:0.2px #1f1f1f;">คณิตศาสตร์</div><div style="position:absolute;left:206.00px;top:239.74px;font-size:13.3px;line-height:13.3px;font-weight:400;color:#1f1f1f;white-space:nowrap;will-change:transform;transform:scaleX(0.9213);transform-origin:0 0;-webkit-text-stroke:0.2px #1f1f1f;">แคลคูลัส</div><div style="position:absolute;left:363.74px;top:239.74px;font-size:13.3px;line-height:13.3px;font-weight:400;color:#1f1f1f;white-space:nowrap;will-change:transform;transform:scaleX(0.9939);transform-origin:0 0;-webkit-text-stroke:0.1px #1f1f1f;">120-145</div><div style="position:absolute;left:440.33px;top:239.74px;font-size:13.3px;line-height:13.3px;font-weight:400;color:#1f1f1f;white-space:nowrap;will-change:transform;transform:scaleX(0.9916);transform-origin:0 0;-webkit-text-stroke:0.1px #1f1f1f;">3</div><div style="position:absolute;left:486.48px;top:239.74px;font-size:13.3px;line-height:13.3px;font-weight:400;color:#1f1f1f;white-space:nowrap;will-change:transform;transform:scaleX(0.9747);transform-origin:0 0;-webkit-text-stroke:0.1px #1f1f1f;">2.5</div><div style="position:absolute;left:522.80px;top:239.74px;font-size:13.3px;line-height:13.3px;font-weight:400;color:#1f1f1f;white-space:nowrap;will-change:transform;transform:scaleX(1.0547);transform-origin:0 0;-webkit-text-stroke:0.1px #1f1f1f;">24/3/2026</div><div style="position:absolute;left:602.97px;top:239.74px;font-size:13.3px;line-height:13.3px;font-weight:400;color:#1f1f1f;white-space:nowrap;will-change:transform;transform:scaleX(0.9388);transform-origin:0 0;-webkit-text-stroke:0.2px #1f1f1f;">อ่านแล้ว</div><div style="position:absolute;left:49.00px;top:260.74px;font-size:13.3px;line-height:13.3px;font-weight:400;color:#1f1f1f;white-space:nowrap;will-change:transform;transform:scaleX(0.9920);transform-origin:0 0;-webkit-text-stroke:0.2px #1f1f1f;">ฟิสิกส์</div><div style="position:absolute;left:206.00px;top:260.74px;font-size:13.3px;line-height:13.3px;font-weight:400;color:#1f1f1f;white-space:nowrap;will-change:transform;transform:scaleX(0.9486);transform-origin:0 0;-webkit-text-stroke:0.2px #1f1f1f;">กลศาสตร์</div><div style="position:absolute;left:371.07px;top:260.74px;font-size:13.3px;line-height:13.3px;font-weight:400;color:#1f1f1f;white-space:nowrap;will-change:transform;-webkit-text-stroke:0.1px #1f1f1f;">55-80</div><div style="position:absolute;left:440.33px;top:260.74px;font-size:13.3px;line-height:13.3px;font-weight:400;color:#1f1f1f;white-space:nowrap;will-change:transform;transform:scaleX(0.9916);transform-origin:0 0;-webkit-text-stroke:0.1px #1f1f1f;">2</div><div style="position:absolute;left:491.83px;top:260.74px;font-size:13.3px;line-height:13.3px;font-weight:400;color:#1f1f1f;white-space:nowrap;will-change:transform;transform:scaleX(0.9916);transform-origin:0 0;-webkit-text-stroke:0.1px #1f1f1f;">2</div><div style="position:absolute;left:522.80px;top:260.74px;font-size:13.3px;line-height:13.3px;font-weight:400;color:#1f1f1f;white-space:nowrap;will-change:transform;transform:scaleX(1.0547);transform-origin:0 0;-webkit-text-stroke:0.1px #1f1f1f;">25/3/2026</div><div style="position:absolute;left:602.97px;top:260.74px;font-size:13.3px;line-height:13.3px;font-weight:400;color:#1f1f1f;white-space:nowrap;will-change:transform;transform:scaleX(0.9388);transform-origin:0 0;-webkit-text-stroke:0.2px #1f1f1f;">อ่านแล้ว</div><div style="position:absolute;left:49.00px;top:281.74px;font-size:13.3px;line-height:13.3px;font-weight:400;color:#1f1f1f;white-space:nowrap;will-change:transform;transform:scaleX(0.8852);transform-origin:0 0;-webkit-text-stroke:0.2px #1f1f1f;">เคมี</div><div style="position:absolute;left:206.00px;top:281.74px;font-size:13.3px;line-height:13.3px;font-weight:400;color:#1f1f1f;white-space:nowrap;will-change:transform;transform:scaleX(0.9425);transform-origin:0 0;-webkit-text-stroke:0.2px #1f1f1f;">พันธะเคมี</div><div style="position:absolute;left:367.41px;top:281.74px;font-size:13.3px;line-height:13.3px;font-weight:400;color:#1f1f1f;white-space:nowrap;will-change:transform;transform:scaleX(1.0189);transform-origin:0 0;-webkit-text-stroke:0.1px #1f1f1f;">88-110</div><div style="position:absolute;left:434.98px;top:281.74px;font-size:13.3px;line-height:13.3px;font-weight:400;color:#1f1f1f;white-space:nowrap;will-change:transform;transform:scaleX(0.9747);transform-origin:0 0;-webkit-text-stroke:0.1px #1f1f1f;">2.5</div><div style="position:absolute;left:522.80px;top:281.74px;font-size:13.3px;line-height:13.3px;font-weight:400;color:#1f1f1f;white-space:nowrap;will-change:transform;transform:scaleX(1.0547);transform-origin:0 0;-webkit-text-stroke:0.1px #1f1f1f;">26/3/2026</div><div style="position:absolute;left:600.15px;top:281.74px;font-size:13.3px;line-height:13.3px;font-weight:400;color:#1f1f1f;white-space:nowrap;will-change:transform;transform:scaleX(0.9567);transform-origin:0 0;-webkit-text-stroke:0.2px #1f1f1f;">กำลังอ่าน</div><div style="position:absolute;left:49.00px;top:302.74px;font-size:13.3px;line-height:13.3px;font-weight:400;color:#1f1f1f;white-space:nowrap;will-change:transform;transform:scaleX(0.9485);transform-origin:0 0;-webkit-text-stroke:0.2px #1f1f1f;">ชีววิทยา</div><div style="position:absolute;left:206.00px;top:302.74px;font-size:13.3px;line-height:13.3px;font-weight:400;color:#1f1f1f;white-space:nowrap;will-change:transform;transform:scaleX(0.9391);transform-origin:0 0;-webkit-text-stroke:0.2px #1f1f1f;">เซลล์และการแบ่งเซลล์</div><div style="position:absolute;left:363.74px;top:302.74px;font-size:13.3px;line-height:13.3px;font-weight:400;color:#1f1f1f;white-space:nowrap;will-change:transform;transform:scaleX(0.9939);transform-origin:0 0;-webkit-text-stroke:0.1px #1f1f1f;">200-230</div><div style="position:absolute;left:440.33px;top:302.74px;font-size:13.3px;line-height:13.3px;font-weight:400;color:#1f1f1f;white-space:nowrap;will-change:transform;transform:scaleX(0.9916);transform-origin:0 0;-webkit-text-stroke:0.1px #1f1f1f;">2</div><div style="position:absolute;left:522.80px;top:302.74px;font-size:13.3px;line-height:13.3px;font-weight:400;color:#1f1f1f;white-space:nowrap;will-change:transform;transform:scaleX(1.0547);transform-origin:0 0;-webkit-text-stroke:0.1px #1f1f1f;">27/3/2026</div><div style="position:absolute;left:602.59px;top:302.74px;font-size:13.3px;line-height:13.3px;font-weight:400;color:#1f1f1f;white-space:nowrap;will-change:transform;transform:scaleX(0.8986);transform-origin:0 0;-webkit-text-stroke:0.2px #1f1f1f;">ยังไม่เริ่ม</div><div style="position:absolute;left:49.00px;top:323.74px;font-size:13.3px;line-height:13.3px;font-weight:400;color:#1f1f1f;white-space:nowrap;will-change:transform;transform:scaleX(0.9241);transform-origin:0 0;-webkit-text-stroke:0.2px #1f1f1f;">ภาษาไทย</div><div style="position:absolute;left:206.00px;top:323.74px;font-size:13.3px;line-height:13.3px;font-weight:400;color:#1f1f1f;white-space:nowrap;will-change:transform;transform:scaleX(0.9307);transform-origin:0 0;-webkit-text-stroke:0.2px #1f1f1f;">วรรณคดีสมัยอยุธยา</div><div style="position:absolute;left:371.07px;top:323.74px;font-size:13.3px;line-height:13.3px;font-weight:400;color:#1f1f1f;white-space:nowrap;will-change:transform;-webkit-text-stroke:0.1px #1f1f1f;">44-60</div><div style="position:absolute;left:434.98px;top:323.74px;font-size:13.3px;line-height:13.3px;font-weight:400;color:#1f1f1f;white-space:nowrap;will-change:transform;transform:scaleX(0.9747);transform-origin:0 0;-webkit-text-stroke:0.1px #1f1f1f;">1.5</div><div style="position:absolute;left:486.48px;top:323.74px;font-size:13.3px;line-height:13.3px;font-weight:400;color:#1f1f1f;white-space:nowrap;will-change:transform;transform:scaleX(0.9747);transform-origin:0 0;-webkit-text-stroke:0.1px #1f1f1f;">1.5</div><div style="position:absolute;left:522.80px;top:323.74px;font-size:13.3px;line-height:13.3px;font-weight:400;color:#1f1f1f;white-space:nowrap;will-change:transform;transform:scaleX(1.0547);transform-origin:0 0;-webkit-text-stroke:0.1px #1f1f1f;">28/3/2026</div><div style="position:absolute;left:602.97px;top:323.74px;font-size:13.3px;line-height:13.3px;font-weight:400;color:#1f1f1f;white-space:nowrap;will-change:transform;transform:scaleX(0.9388);transform-origin:0 0;-webkit-text-stroke:0.2px #1f1f1f;">อ่านแล้ว</div><div style="position:absolute;left:49.00px;top:344.74px;font-size:13.3px;line-height:13.3px;font-weight:400;color:#1f1f1f;white-space:nowrap;will-change:transform;transform:scaleX(0.9646);transform-origin:0 0;-webkit-text-stroke:0.2px #1f1f1f;">ภาษาอังกฤษ</div><div style="position:absolute;left:206.00px;top:344.74px;font-size:13.3px;line-height:13.3px;font-weight:400;color:#1f1f1f;white-space:nowrap;will-change:transform;transform:scaleX(0.9647);transform-origin:0 0;-webkit-text-stroke:0.1px #1f1f1f;">Grammar: Present Perfect</div><div style="position:absolute;left:371.07px;top:344.74px;font-size:13.3px;line-height:13.3px;font-weight:400;color:#1f1f1f;white-space:nowrap;will-change:transform;-webkit-text-stroke:0.1px #1f1f1f;">30-45</div><div style="position:absolute;left:440.33px;top:344.74px;font-size:13.3px;line-height:13.3px;font-weight:400;color:#1f1f1f;white-space:nowrap;will-change:transform;transform:scaleX(0.9916);transform-origin:0 0;-webkit-text-stroke:0.1px #1f1f1f;">1</div><div style="position:absolute;left:522.80px;top:344.74px;font-size:13.3px;line-height:13.3px;font-weight:400;color:#1f1f1f;white-space:nowrap;will-change:transform;transform:scaleX(1.0547);transform-origin:0 0;-webkit-text-stroke:0.1px #1f1f1f;">29/3/2026</div><div style="position:absolute;left:602.59px;top:344.74px;font-size:13.3px;line-height:13.3px;font-weight:400;color:#1f1f1f;white-space:nowrap;will-change:transform;transform:scaleX(0.8986);transform-origin:0 0;-webkit-text-stroke:0.2px #1f1f1f;">ยังไม่เริ่ม</div><div style="position:absolute;left:49.00px;top:365.74px;font-size:13.3px;line-height:13.3px;font-weight:400;color:#1f1f1f;white-space:nowrap;will-change:transform;transform:scaleX(0.9608);transform-origin:0 0;-webkit-text-stroke:0.2px #1f1f1f;">ประวัติศาสตร์</div><div style="position:absolute;left:206.00px;top:365.74px;font-size:13.3px;line-height:13.3px;font-weight:400;color:#1f1f1f;white-space:nowrap;will-change:transform;transform:scaleX(0.9186);transform-origin:0 0;-webkit-text-stroke:0.2px #1f1f1f;">สมัยสุโขทัย</div><div style="position:absolute;left:371.07px;top:365.74px;font-size:13.3px;line-height:13.3px;font-weight:400;color:#1f1f1f;white-space:nowrap;will-change:transform;-webkit-text-stroke:0.1px #1f1f1f;">15-40</div><div style="position:absolute;left:440.33px;top:365.74px;font-size:13.3px;line-height:13.3px;font-weight:400;color:#1f1f1f;white-space:nowrap;will-change:transform;transform:scaleX(0.9916);transform-origin:0 0;-webkit-text-stroke:0.1px #1f1f1f;">2</div><div style="position:absolute;left:491.83px;top:365.74px;font-size:13.3px;line-height:13.3px;font-weight:400;color:#1f1f1f;white-space:nowrap;will-change:transform;transform:scaleX(0.9916);transform-origin:0 0;-webkit-text-stroke:0.1px #1f1f1f;">2</div><div style="position:absolute;left:522.80px;top:365.74px;font-size:13.3px;line-height:13.3px;font-weight:400;color:#1f1f1f;white-space:nowrap;will-change:transform;transform:scaleX(1.0547);transform-origin:0 0;-webkit-text-stroke:0.1px #1f1f1f;">22/3/2026</div><div style="position:absolute;left:593.65px;top:365.74px;font-size:13.3px;line-height:13.3px;font-weight:400;color:#1f1f1f;white-space:nowrap;will-change:transform;transform:scaleX(0.9652);transform-origin:0 0;-webkit-text-stroke:0.2px #1f1f1f;">ทบทวนแล้ว</div><div style="position:absolute;left:49.00px;top:386.74px;font-size:13.3px;line-height:13.3px;font-weight:400;color:#1f1f1f;white-space:nowrap;will-change:transform;transform:scaleX(0.9271);transform-origin:0 0;-webkit-text-stroke:0.2px #1f1f1f;">คณิตศาสตร์</div><div style="position:absolute;left:206.00px;top:386.74px;font-size:13.3px;line-height:13.3px;font-weight:400;color:#1f1f1f;white-space:nowrap;will-change:transform;transform:scaleX(0.9331);transform-origin:0 0;-webkit-text-stroke:0.2px #1f1f1f;">ลิมิตและความต่อเนื่อง</div><div style="position:absolute;left:363.74px;top:386.74px;font-size:13.3px;line-height:13.3px;font-weight:400;color:#1f1f1f;white-space:nowrap;will-change:transform;transform:scaleX(1.0147);transform-origin:0 0;-webkit-text-stroke:0.1px #1f1f1f;">100-119</div><div style="position:absolute;left:434.98px;top:386.74px;font-size:13.3px;line-height:13.3px;font-weight:400;color:#1f1f1f;white-space:nowrap;will-change:transform;transform:scaleX(0.9747);transform-origin:0 0;-webkit-text-stroke:0.1px #1f1f1f;">2.5</div><div style="position:absolute;left:491.83px;top:386.74px;font-size:13.3px;line-height:13.3px;font-weight:400;color:#1f1f1f;white-space:nowrap;will-change:transform;transform:scaleX(0.9916);transform-origin:0 0;-webkit-text-stroke:0.1px #1f1f1f;">1</div><div style="position:absolute;left:522.80px;top:386.74px;font-size:13.3px;line-height:13.3px;font-weight:400;color:#1f1f1f;white-space:nowrap;will-change:transform;transform:scaleX(1.0547);transform-origin:0 0;-webkit-text-stroke:0.1px #1f1f1f;">30/3/2026</div><div style="position:absolute;left:600.15px;top:386.74px;font-size:13.3px;line-height:13.3px;font-weight:400;color:#1f1f1f;white-space:nowrap;will-change:transform;transform:scaleX(0.9567);transform-origin:0 0;-webkit-text-stroke:0.2px #1f1f1f;">กำลังอ่าน</div><div style="position:absolute;left:49.00px;top:407.74px;font-size:13.3px;line-height:13.3px;font-weight:400;color:#1f1f1f;white-space:nowrap;will-change:transform;transform:scaleX(0.9920);transform-origin:0 0;-webkit-text-stroke:0.2px #1f1f1f;">ฟิสิกส์</div><div style="position:absolute;left:206.00px;top:407.74px;font-size:13.3px;line-height:13.3px;font-weight:400;color:#1f1f1f;white-space:nowrap;will-change:transform;transform:scaleX(0.9397);transform-origin:0 0;-webkit-text-stroke:0.2px #1f1f1f;">คลื่นและเสียง</div><div style="position:absolute;left:367.41px;top:407.74px;font-size:13.3px;line-height:13.3px;font-weight:400;color:#1f1f1f;white-space:nowrap;will-change:transform;transform:scaleX(1.0189);transform-origin:0 0;-webkit-text-stroke:0.1px #1f1f1f;">90-115</div><div style="position:absolute;left:440.33px;top:407.74px;font-size:13.3px;line-height:13.3px;font-weight:400;color:#1f1f1f;white-space:nowrap;will-change:transform;transform:scaleX(0.9916);transform-origin:0 0;-webkit-text-stroke:0.1px #1f1f1f;">2</div><div style="position:absolute;left:526.48px;top:407.74px;font-size:13.3px;line-height:13.3px;font-weight:400;color:#1f1f1f;white-space:nowrap;will-change:transform;transform:scaleX(1.0634);transform-origin:0 0;-webkit-text-stroke:0.1px #1f1f1f;">1/4/2026</div><div style="position:absolute;left:602.59px;top:407.74px;font-size:13.3px;line-height:13.3px;font-weight:400;color:#1f1f1f;white-space:nowrap;will-change:transform;transform:scaleX(0.8986);transform-origin:0 0;-webkit-text-stroke:0.2px #1f1f1f;">ยังไม่เริ่ม</div><div style="position:absolute;left:49.00px;top:428.74px;font-size:13.3px;line-height:13.3px;font-weight:400;color:#1f1f1f;white-space:nowrap;will-change:transform;transform:scaleX(0.8852);transform-origin:0 0;-webkit-text-stroke:0.2px #1f1f1f;">เคมี</div><div style="position:absolute;left:206.00px;top:428.74px;font-size:13.3px;line-height:13.3px;font-weight:400;color:#1f1f1f;white-space:nowrap;will-change:transform;transform:scaleX(0.9349);transform-origin:0 0;-webkit-text-stroke:0.2px #1f1f1f;">อินทิเกรต</div><div style="position:absolute;left:363.74px;top:428.74px;font-size:13.3px;line-height:13.3px;font-weight:400;color:#1f1f1f;white-space:nowrap;will-change:transform;transform:scaleX(0.9939);transform-origin:0 0;-webkit-text-stroke:0.1px #1f1f1f;">146-170</div><div style="position:absolute;left:440.33px;top:428.74px;font-size:13.3px;line-height:13.3px;font-weight:400;color:#1f1f1f;white-space:nowrap;will-change:transform;transform:scaleX(0.9916);transform-origin:0 0;-webkit-text-stroke:0.1px #1f1f1f;">3</div><div style="position:absolute;left:526.48px;top:428.74px;font-size:13.3px;line-height:13.3px;font-weight:400;color:#1f1f1f;white-space:nowrap;will-change:transform;transform:scaleX(1.0634);transform-origin:0 0;-webkit-text-stroke:0.1px #1f1f1f;">2/4/2026</div><div style="position:absolute;left:602.59px;top:428.74px;font-size:13.3px;line-height:13.3px;font-weight:400;color:#1f1f1f;white-space:nowrap;will-change:transform;transform:scaleX(0.8986);transform-origin:0 0;-webkit-text-stroke:0.2px #1f1f1f;">ยังไม่เริ่ม</div><div style="position:absolute;left:49.00px;top:449.74px;font-size:13.3px;line-height:13.3px;font-weight:400;color:#1f1f1f;white-space:nowrap;will-change:transform;transform:scaleX(0.9485);transform-origin:0 0;-webkit-text-stroke:0.2px #1f1f1f;">ชีววิทยา</div><div style="position:absolute;left:206.00px;top:449.74px;font-size:13.3px;line-height:13.3px;font-weight:400;color:#1f1f1f;white-space:nowrap;will-change:transform;transform:scaleX(0.9353);transform-origin:0 0;-webkit-text-stroke:0.2px #1f1f1f;">ปฏิกิริยาเคมี</div><div style="position:absolute;left:363.74px;top:449.74px;font-size:13.3px;line-height:13.3px;font-weight:400;color:#1f1f1f;white-space:nowrap;will-change:transform;transform:scaleX(1.0360);transform-origin:0 0;-webkit-text-stroke:0.1px #1f1f1f;">111-135</div><div style="position:absolute;left:434.98px;top:449.74px;font-size:13.3px;line-height:13.3px;font-weight:400;color:#1f1f1f;white-space:nowrap;will-change:transform;transform:scaleX(0.9747);transform-origin:0 0;-webkit-text-stroke:0.1px #1f1f1f;">2.5</div><div style="position:absolute;left:526.48px;top:449.74px;font-size:13.3px;line-height:13.3px;font-weight:400;color:#1f1f1f;white-space:nowrap;will-change:transform;transform:scaleX(1.0634);transform-origin:0 0;-webkit-text-stroke:0.1px #1f1f1f;">3/4/2026</div><div style="position:absolute;left:602.59px;top:449.74px;font-size:13.3px;line-height:13.3px;font-weight:400;color:#1f1f1f;white-space:nowrap;will-change:transform;transform:scaleX(0.8986);transform-origin:0 0;-webkit-text-stroke:0.2px #1f1f1f;">ยังไม่เริ่ม</div><div style="position:absolute;left:49.00px;top:470.74px;font-size:13.3px;line-height:13.3px;font-weight:400;color:#1f1f1f;white-space:nowrap;will-change:transform;transform:scaleX(0.9241);transform-origin:0 0;-webkit-text-stroke:0.2px #1f1f1f;">ภาษาไทย</div><div style="position:absolute;left:206.00px;top:470.74px;font-size:13.3px;line-height:13.3px;font-weight:400;color:#1f1f1f;white-space:nowrap;will-change:transform;transform:scaleX(0.9796);transform-origin:0 0;-webkit-text-stroke:0.1px #1f1f1f;">Vocabulary Unit 5</div><div style="position:absolute;left:371.07px;top:470.74px;font-size:13.3px;line-height:13.3px;font-weight:400;color:#1f1f1f;white-space:nowrap;will-change:transform;-webkit-text-stroke:0.1px #1f1f1f;">50-65</div><div style="position:absolute;left:440.33px;top:470.74px;font-size:13.3px;line-height:13.3px;font-weight:400;color:#1f1f1f;white-space:nowrap;will-change:transform;transform:scaleX(0.9916);transform-origin:0 0;-webkit-text-stroke:0.1px #1f1f1f;">1</div><div style="position:absolute;left:486.48px;top:470.74px;font-size:13.3px;line-height:13.3px;font-weight:400;color:#1f1f1f;white-space:nowrap;will-change:transform;transform:scaleX(0.9747);transform-origin:0 0;-webkit-text-stroke:0.1px #1f1f1f;">0.5</div><div style="position:absolute;left:526.48px;top:470.74px;font-size:13.3px;line-height:13.3px;font-weight:400;color:#1f1f1f;white-space:nowrap;will-change:transform;transform:scaleX(1.0634);transform-origin:0 0;-webkit-text-stroke:0.1px #1f1f1f;">4/4/2026</div><div style="position:absolute;left:600.15px;top:470.74px;font-size:13.3px;line-height:13.3px;font-weight:400;color:#1f1f1f;white-space:nowrap;will-change:transform;transform:scaleX(0.9567);transform-origin:0 0;-webkit-text-stroke:0.2px #1f1f1f;">กำลังอ่าน</div><div style="position:absolute;left:49.00px;top:491.74px;font-size:13.3px;line-height:13.3px;font-weight:400;color:#1f1f1f;white-space:nowrap;will-change:transform;transform:scaleX(0.9646);transform-origin:0 0;-webkit-text-stroke:0.2px #1f1f1f;">ภาษาอังกฤษ</div><div style="position:absolute;left:206.00px;top:491.74px;font-size:13.3px;line-height:13.3px;font-weight:400;color:#1f1f1f;white-space:nowrap;will-change:transform;transform:scaleX(0.9870);transform-origin:0 0;-webkit-text-stroke:0.2px #1f1f1f;">ระบบนิเวศ</div><div style="position:absolute;left:363.74px;top:491.74px;font-size:13.3px;line-height:13.3px;font-weight:400;color:#1f1f1f;white-space:nowrap;will-change:transform;transform:scaleX(0.9939);transform-origin:0 0;-webkit-text-stroke:0.1px #1f1f1f;">231-260</div><div style="position:absolute;left:440.33px;top:491.74px;font-size:13.3px;line-height:13.3px;font-weight:400;color:#1f1f1f;white-space:nowrap;will-change:transform;transform:scaleX(0.9916);transform-origin:0 0;-webkit-text-stroke:0.1px #1f1f1f;">2</div><div style="position:absolute;left:526.48px;top:491.74px;font-size:13.3px;line-height:13.3px;font-weight:400;color:#1f1f1f;white-space:nowrap;will-change:transform;transform:scaleX(1.0634);transform-origin:0 0;-webkit-text-stroke:0.1px #1f1f1f;">5/4/2026</div><div style="position:absolute;left:602.59px;top:491.74px;font-size:13.3px;line-height:13.3px;font-weight:400;color:#1f1f1f;white-space:nowrap;will-change:transform;transform:scaleX(0.8986);transform-origin:0 0;-webkit-text-stroke:0.2px #1f1f1f;">ยังไม่เริ่ม</div><div style="position:absolute;left:49.00px;top:512.74px;font-size:13.3px;line-height:13.3px;font-weight:400;color:#1f1f1f;white-space:nowrap;will-change:transform;transform:scaleX(0.9608);transform-origin:0 0;-webkit-text-stroke:0.2px #1f1f1f;">ประวัติศาสตร์</div><div style="position:absolute;left:206.00px;top:512.74px;font-size:13.3px;line-height:13.3px;font-weight:400;color:#1f1f1f;white-space:nowrap;will-change:transform;transform:scaleX(0.9259);transform-origin:0 0;-webkit-text-stroke:0.2px #1f1f1f;">สมัยรัตนโกสินทร์</div><div style="position:absolute;left:371.07px;top:512.74px;font-size:13.3px;line-height:13.3px;font-weight:400;color:#1f1f1f;white-space:nowrap;will-change:transform;-webkit-text-stroke:0.1px #1f1f1f;">41-70</div><div style="position:absolute;left:440.33px;top:512.74px;font-size:13.3px;line-height:13.3px;font-weight:400;color:#1f1f1f;white-space:nowrap;will-change:transform;transform:scaleX(0.9916);transform-origin:0 0;-webkit-text-stroke:0.1px #1f1f1f;">2</div><div style="position:absolute;left:526.48px;top:512.74px;font-size:13.3px;line-height:13.3px;font-weight:400;color:#1f1f1f;white-space:nowrap;will-change:transform;transform:scaleX(1.0634);transform-origin:0 0;-webkit-text-stroke:0.1px #1f1f1f;">6/4/2026</div><div style="position:absolute;left:602.59px;top:512.74px;font-size:13.3px;line-height:13.3px;font-weight:400;color:#1f1f1f;white-space:nowrap;will-change:transform;transform:scaleX(0.8986);transform-origin:0 0;-webkit-text-stroke:0.2px #1f1f1f;">ยังไม่เริ่ม</div><div style="position:absolute;left:49.00px;top:533.74px;font-size:13.3px;line-height:13.3px;font-weight:400;color:#1f1f1f;white-space:nowrap;will-change:transform;transform:scaleX(0.9271);transform-origin:0 0;-webkit-text-stroke:0.2px #1f1f1f;">คณิตศาสตร์</div><div style="position:absolute;left:206.00px;top:533.74px;font-size:13.3px;line-height:13.3px;font-weight:400;color:#1f1f1f;white-space:nowrap;will-change:transform;transform:scaleX(0.9660);transform-origin:0 0;-webkit-text-stroke:0.2px #1f1f1f;">สัญญาณไฟฟ้า</div><div style="position:absolute;left:363.74px;top:533.74px;font-size:13.3px;line-height:13.3px;font-weight:400;color:#1f1f1f;white-space:nowrap;will-change:transform;transform:scaleX(0.9939);transform-origin:0 0;-webkit-text-stroke:0.1px #1f1f1f;">130-155</div><div style="position:absolute;left:434.98px;top:533.74px;font-size:13.3px;line-height:13.3px;font-weight:400;color:#1f1f1f;white-space:nowrap;will-change:transform;transform:scaleX(0.9747);transform-origin:0 0;-webkit-text-stroke:0.1px #1f1f1f;">2.5</div><div style="position:absolute;left:526.48px;top:533.74px;font-size:13.3px;line-height:13.3px;font-weight:400;color:#1f1f1f;white-space:nowrap;will-change:transform;transform:scaleX(1.0634);transform-origin:0 0;-webkit-text-stroke:0.1px #1f1f1f;">7/4/2026</div><div style="position:absolute;left:602.59px;top:533.74px;font-size:13.3px;line-height:13.3px;font-weight:400;color:#1f1f1f;white-space:nowrap;will-change:transform;transform:scaleX(0.8986);transform-origin:0 0;-webkit-text-stroke:0.2px #1f1f1f;">ยังไม่เริ่ม</div><div style="position:absolute;left:146.20px;top:875.10px;font-size:15px;line-height:15px;font-weight:400;color:#444746;white-space:nowrap;will-change:transform;transform:scaleX(1.0219);transform-origin:0 0;-webkit-text-stroke:0.25px #444746;">Dashboard</div><div style="position:absolute;left:266.00px;top:876.73px;font-size:14.5px;line-height:14.5px;font-weight:700;color:#444746;white-space:nowrap;will-change:transform;transform:scaleX(0.9437);transform-origin:0 0;">ตารางเรียน</div><div style="position:absolute;left:377.70px;top:876.73px;font-size:14.5px;line-height:14.5px;font-weight:700;color:#0b57d0;white-space:nowrap;will-change:transform;transform:scaleX(0.9426);transform-origin:0 0;">วางแผนอ่านหนังสือ</div><div style="position:absolute;left:537.00px;top:876.73px;font-size:14.5px;line-height:14.5px;font-weight:700;color:#444746;white-space:nowrap;will-change:transform;transform:scaleX(0.9485);transform-origin:0 0;">ติดตามการบ้าน</div><div style="position:absolute;left:674.00px;top:876.73px;font-size:14.5px;line-height:14.5px;font-weight:700;color:#444746;white-space:nowrap;will-change:transform;transform:scaleX(0.9706);transform-origin:0 0;">วิธีใช้</div>
</body></html>
